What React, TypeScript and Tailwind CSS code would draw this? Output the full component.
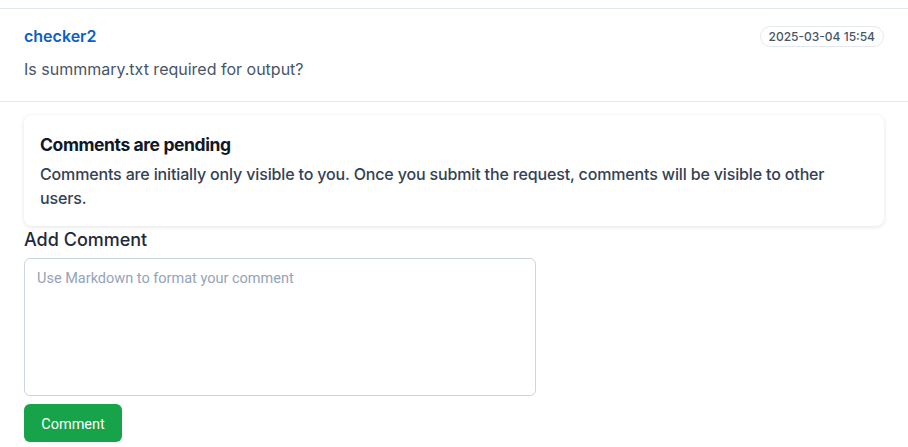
import React from "react";

export default function App() {
  return (
    <div className="w-[908px] h-[447px] overflow-hidden bg-white" style={{ fontFamily: "Inter, 'Noto Sans', sans-serif" }}>
      <div className="h-2" />
      <div className="border-t border-b border-[#e2e8f0] px-6 pt-[16px] pb-[20px]">
        <div className="flex items-center justify-between">
          <span className="text-[16px] leading-[22px] font-semibold text-[#0b5fc6]">checker2</span>
          <span className="rounded-full border border-[#e2e8f0] px-2 py-[2px] text-[12px] leading-[15px] font-medium text-[#475569]">2025-03-04 15:54</span>
        </div>
        <p className="mt-[10px] text-[16px] leading-[24px] text-[#475569]">Is summmary.txt required for output?</p>
      </div>
      <div className="px-6 pt-[13px]">
        <div className="rounded-lg bg-white shadow-[0_1px_4px_rgba(15,23,42,0.12)] px-4 pt-[17px] pb-[16px]">
          <h3 className="text-[17.5px] leading-[26px] font-bold text-[#0f172a] tracking-[-0.4px]">Comments are pending</h3>
          <p className="mt-[4px] max-w-[820px] text-[16px] leading-[24px] font-medium text-[#334155] tracking-[-0.15px]">
            Comments are initially only visible to you. Once you submit the request, comments will be visible to other users.
          </p>
        </div>
        <div className="mt-[2px] text-[18px] leading-[24px] font-medium text-[#1e293b]">Add Comment</div>
        <textarea
          className="mt-[6px] block w-[512px] h-[138px] resize-none rounded-md border border-[#cbd5e1] px-3 pt-[9px] text-[14.5px] placeholder:text-[#94a3b8] outline-none"
          style={{ fontFamily: "Roboto, sans-serif" }}
          placeholder="Use Markdown to format your comment"
        />
        <button
          className="mt-2 h-[38px] w-[98px] rounded-md bg-[#16a34a] pt-[4px] text-white text-[14.5px] leading-[20px]"
          style={{ fontFamily: "Roboto, sans-serif" }}
        >
          Comment
        </button>
      </div>
    </div>
  );
}
